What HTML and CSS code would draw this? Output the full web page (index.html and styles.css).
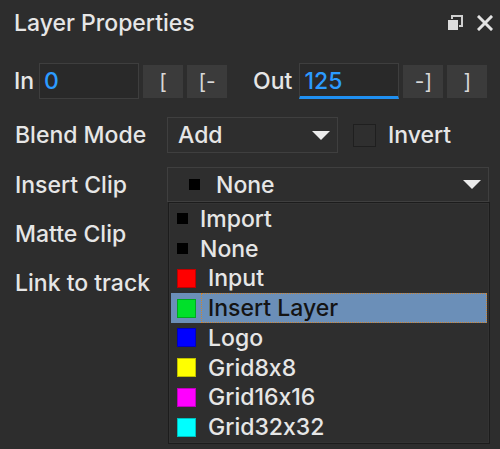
FILE: index.html
```html
<!DOCTYPE html>
<html>
<head>
<meta charset="utf-8">
<link rel="stylesheet" href="styles.css">
</head>
<body>
<div class="panel">
  <div class="titlebar">
    <span class="title">Layer Properties</span>
    <div class="tb-icons">
      <svg class="ico-restore" width="16" height="16" viewBox="0 0 16 16">
        <rect x="5" y="1" width="10" height="10" fill="none" stroke="#cfcfcf" stroke-width="2"/>
        <rect x="0.5" y="4.5" width="11" height="11" fill="#dcdcdc" stroke="#2d2d2d" stroke-width="1"/>
      </svg>
      <svg class="ico-close" width="16" height="16" viewBox="0 0 16 16">
        <path d="M2 2 L14 14 M14 2 L2 14" stroke="#e4e4e4" stroke-width="3" stroke-linecap="square"/>
      </svg>
    </div>
  </div>

  <div class="row row-io">
    <span class="lbl lbl-in">In</span>
    <div class="field field-in">0</div>
    <div class="btn">[</div>
    <div class="btn">[-</div>
    <span class="lbl lbl-out">Out</span>
    <div class="field field-out">125</div>
    <div class="btn">-]</div>
    <div class="btn">]</div>
  </div>

  <div class="row row-blend">
    <span class="lbl col">Blend Mode</span>
    <div class="combo combo-blend"><span class="combo-text">Add</span><span class="arrow"></span></div>
    <span class="check"></span>
    <span class="lbl">Invert</span>
  </div>

  <div class="row row-insert">
    <span class="lbl col">Insert Clip</span>
    <div class="combo combo-insert">
      <span class="sq sq-small combo-sq"></span><span class="combo-text">None</span><span class="arrow"></span>
      <div class="popup">
        <div class="item"><span class="sq sq-small"></span><span class="itext">Import</span></div>
        <div class="item"><span class="sq sq-small"></span><span class="itext">None</span></div>
        <div class="item"><span class="sq sq-big c-red"></span><span class="itext">Input</span></div>
        <div class="item sel"><span class="sq sq-big c-green"></span><span class="itext">Insert Layer</span></div>
        <div class="item"><span class="sq sq-big c-blue"></span><span class="itext">Logo</span></div>
        <div class="item"><span class="sq sq-big c-yellow"></span><span class="itext">Grid8x8</span></div>
        <div class="item"><span class="sq sq-big c-magenta"></span><span class="itext">Grid16x16</span></div>
        <div class="item"><span class="sq sq-big c-cyan"></span><span class="itext">Grid32x32</span></div>
      </div>
    </div>
  </div>

  <div class="row row-matte">
    <span class="lbl col">Matte Clip</span>
  </div>

  <div class="row row-link">
    <span class="lbl col">Link to track</span>
  </div>
</div>
</body>
</html>
```

FILE: styles.css
```css
html, body {
  margin: 0;
  padding: 0;
}
body {
  background: #2d2d2d;
  width: 500px;
  height: 449px;
  overflow: hidden;
  font-family: Inter, "Open Sans", sans-serif;
  font-size: 23px;
  font-weight: 500;
  font-feature-settings: "calt" 0;
  color: #e6e6e6;
}
.panel {
  display: flex;
  flex-direction: column;
}
.titlebar {
  height: 44px;
  display: flex;
  align-items: center;
  justify-content: space-between;
  padding: 0 7px 0 14px;
}
.title { padding-top: 1px; }
.tb-icons {
  display: flex;
  align-items: center;
  gap: 14px;
  padding-top: 2px;
}
.row {
  display: flex;
  align-items: center;
  height: 36px;
  padding-left: 15px;
}
.row-io { margin-top: 19px; padding-left: 14px; }
.row-blend { margin-top: 18px; }
.row-insert { margin-top: 14px; height: 35px; }
.row-matte { margin-top: 14px; }
.row-link { margin-top: 13px; }

.lbl { white-space: nowrap; }
.col { width: 152px; flex: none; }

.field {
  box-sizing: border-box;
  width: 100px;
  height: 36px;
  background: #292929;
  border: 1px solid #3e3e3e;
  color: #2c9bff;
  padding-left: 4px;
  display: flex;
  align-items: center;
}
.field-in { margin-left: 5px; }
.field-out {
  margin-left: 7px;
  border-bottom: 3px solid #1f8ff0;
  padding-top: 2px;
}
.btn {
  box-sizing: border-box;
  width: 40px;
  height: 33px;
  margin-left: 4px;
  background: #3b3b3b;
  color: #d8d8d8;
  display: flex;
  align-items: center;
  justify-content: center;
  font-size: 21px;
  font-weight: 400;
}
.lbl-out { margin-left: 26px; }

.combo {
  box-sizing: border-box;
  height: 36px;
  border: 1px solid #3f3f3f;
  background: #2e2e2e;
  display: flex;
  align-items: center;
  padding: 0 7px 0 10px;
  position: relative;
}
.combo-blend { width: 171px; }
.combo-insert { width: 322px; height: 35px; padding-left: 21px; }
.combo-text { flex: 1; }
.combo-sq { margin-right: 16px; }
.arrow {
  width: 0;
  height: 0;
  border-left: 9px solid transparent;
  border-right: 9px solid transparent;
  border-top: 9px solid #ececec;
}
.check {
  box-sizing: border-box;
  width: 23px;
  height: 23px;
  border: 1px solid #1f1f1f;
  background: #2f2f2f;
  margin-left: 15px;
  margin-right: 12px;
}

.sq {
  display: inline-block;
  flex: none;
  box-sizing: border-box;
}
.sq-small {
  width: 11px;
  height: 11px;
  background: #000;
}
.sq-big {
  width: 19px;
  height: 19px;
  border: 1px solid rgba(0,0,0,0.25);
}
.c-red { background: #ff0000; }
.c-green { background: #00e02a; }
.c-blue { background: #0000ff; }
.c-yellow { background: #ffff00; }
.c-magenta { background: #ff00ff; }
.c-cyan { background: #00ffff; }

.popup {
  position: absolute;
  left: 0;
  top: 34px;
  width: 322px;
  box-sizing: border-box;
  background: #2e2e2e;
  border: 1px solid #1c1c1c;
  box-shadow: inset 0 0 0 1px #333;
  padding: 1px 2px 1px 2px;
}
.item {
  height: 29.75px;
  display: flex;
  align-items: center;
  padding-left: 6px;
  box-sizing: border-box;
}
.itext {
  margin-left: 12px;
}
.item.sel {
  background: #6b8fb8;
  color: #141414;
}
.item.sel .itext {
  flex: 1;
  align-self: stretch;
  display: flex;
  align-items: center;
  margin-left: 5px;
  padding-left: 6px;
  border: 1px dotted #d08530;
}
```
